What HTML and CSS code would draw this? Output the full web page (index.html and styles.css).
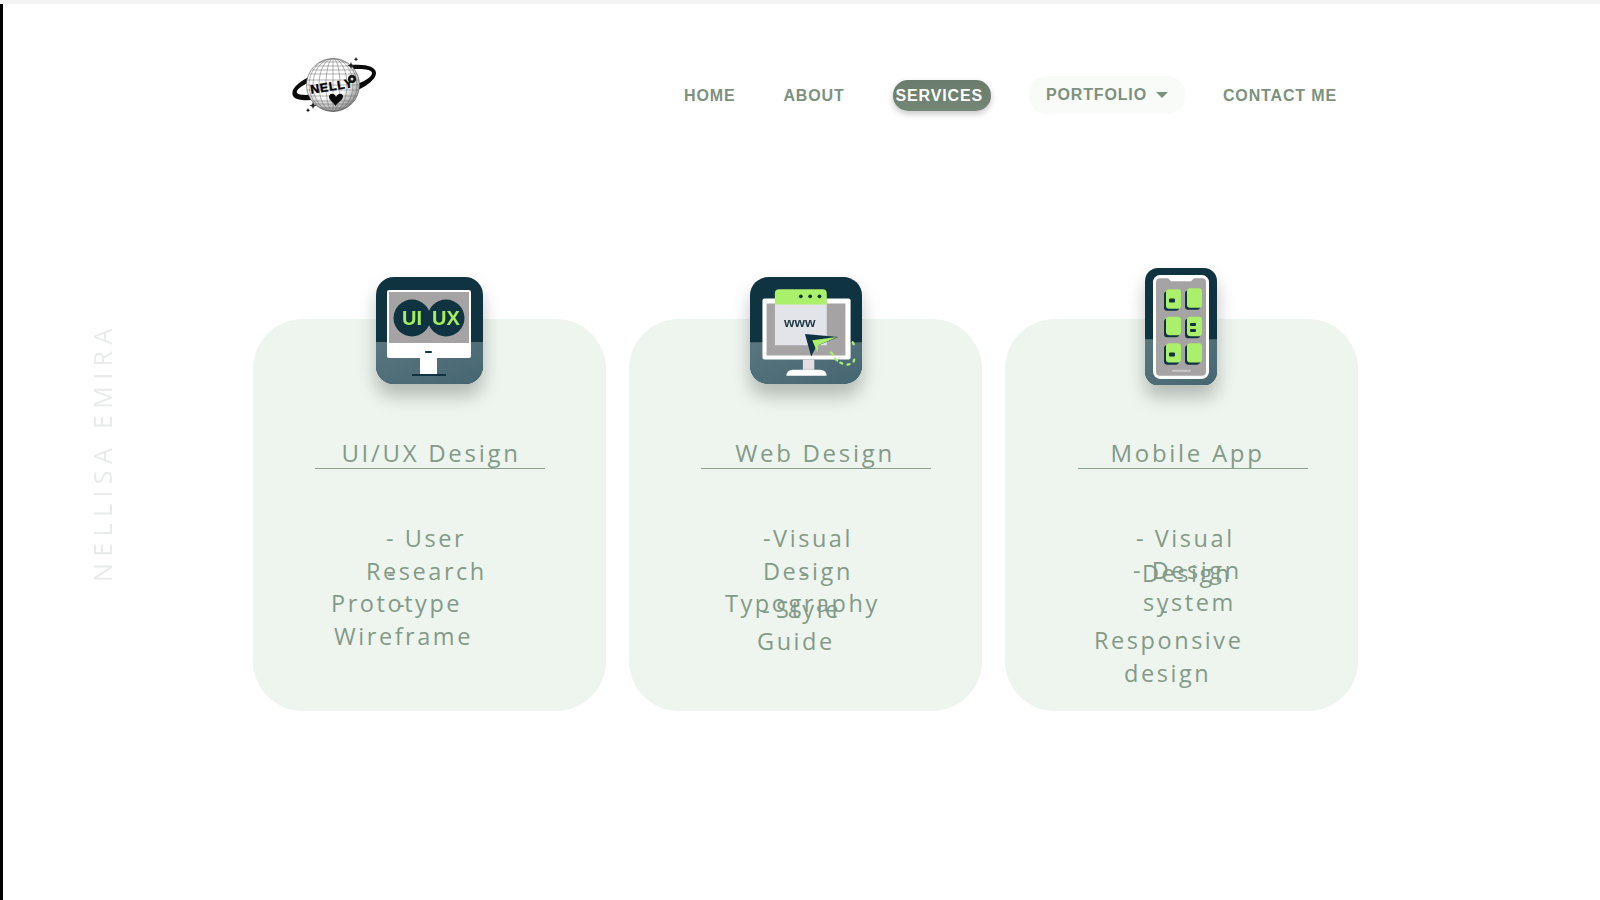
FILE: index.html
```html
<!DOCTYPE html>
<html lang="en">
<head>
<meta charset="utf-8">
<title>Services</title>
<link rel="stylesheet" href="styles.css">
</head>
<body>
<div class="topbar"></div>
<div class="shell">
  <header class="header">
    <a class="logo" href="#" aria-label="Nelly logo">
      <svg width="90" height="62" viewBox="0 0 90 62">
        <defs>
          <radialGradient id="gl" cx="0.38" cy="0.3" r="0.8"><stop offset="0.55" stop-color="#fff"/><stop offset="1" stop-color="#777"/></radialGradient>
          <clipPath id="gc"><circle cx="42" cy="31" r="26.500"/></clipPath>
        </defs>
        <path d="M2 42C-3 31 24 17 52 12C70 9 85 11 85 19C85 27 70 37 48 42C30 46 6 49 2 42ZM6 39C9 43 30 40 46 36.500C64 32 81 25 81 19C81 15 68 14 54 16C34 20 3 33 6 39Z" fill="#0a0a0a" fill-rule="evenodd"/>
        <circle cx="42" cy="31" r="26.500" fill="url(#gl)"/>
        <g clip-path="url(#gc)" fill="none" stroke="#666" stroke-width="0.5">
          <ellipse cx="42" cy="31" rx="7" ry="26.500"/><ellipse cx="42" cy="31" rx="14" ry="26.500"/><ellipse cx="42" cy="31" rx="20" ry="26.500"/><ellipse cx="42" cy="31" rx="24" ry="26.500"/>
          <path d="M42 4V58M15 31H69M18 20H66M18 42H66M24 12H60M24 50H60M16 26H68M16 36H68M20 47H64M21 16H63M28 8H56M28 54H56"/>
        </g>
        <circle cx="42" cy="31" r="26.500" fill="none" stroke="#555" stroke-width="0.6"/>
        <text class="logo-word" x="19" y="37" transform="rotate(-9 38 32)">NELLY</text>
        <circle cx="61" cy="25" r="4" fill="#111"/><circle cx="61" cy="25" r="1.500" fill="#ddd"/>
        <path d="M45 43C43.500 38.500 38 39 38 43C38 46 42 48 44.500 52C47 48 52 46 52 42.500C52 39 47 38.500 45 43Z" fill="#0a0a0a"/>
        <path d="M60 8l1 2.500 2.500 1-2.500 1-1 2.500-1-2.500-2.500-1 2.500-1zM65 3l.7 1.500 1.500.7-1.500.7-.7 1.500-.7-1.500-1.500-.7 1.500-.7zM22 48l1 2.500 2.500 1-2.500 1-1 2.500-1-2.500-2.500-1 2.500-1zM17 54l.7 1.500 1.500.7-1.500.7-.7 1.500-.7-1.500-1.500-.7 1.500-.7z" fill="#222"/>
      </svg>
    </a>
    <nav class="nav">
      <a class="nav-link" href="#">HOME</a>
      <a class="nav-link" href="#">ABOUT</a>
      <a class="nav-link nav-active" href="#">SERVICES</a>
      <a class="nav-link nav-drop" href="#">PORTFOLIO<span class="caret"></span></a>
      <a class="nav-link nav-contact" href="#">CONTACT ME</a>
    </nav>
  </header>

  <main class="content">
    <aside class="side-name">NELLISA EMIRA</aside>
    <section class="cards">
      <article class="card">
        <div class="icon-row">
          <svg class="icon" width="107" height="107" viewBox="0 0 107 107">
            <defs><linearGradient id="lo" x1="0" y1="0" x2="1" y2="1"><stop offset="0" stop-color="#58767f"/><stop offset="1" stop-color="#466672"/></linearGradient></defs>
            <rect width="107" height="107" rx="18" fill="#0f3341"/>
            <path d="M0 65H107V89A18 18 0 0 1 89 107H18A18 18 0 0 1 0 89Z" fill="url(#lo)"/>
            <rect x="11" y="13" width="84" height="68" rx="2" fill="#fff"/>
            <rect x="13" y="15" width="80" height="51" fill="#a5a3a3"/>
            <circle cx="36" cy="41" r="18.500" fill="#0f3341"/><circle cx="70" cy="41" r="18.500" fill="#0f3341"/>
            <text class="ui-word" x="36" y="48">UI</text><text class="ui-word" x="70" y="48">UX</text>
            <rect x="44" y="78" width="17" height="19" fill="#fff"/>
            <rect x="49" y="74" width="7" height="2" rx="1" fill="#0f3341"/>
            <rect x="36" y="97" width="34" height="2" fill="#0f3341"/>
          </svg>
        </div>
        <h2 class="title title-ux">UI/UX Design</h2>
        <div class="rule rule-ux"></div>
        <div class="body">
          <span class="line c1a">- User</span>
          <span class="line c1b">Research</span>
          <span class="line c1c">Prototype</span>
          <span class="line c1d">Wireframe</span>
          <span class="dash d1a">-</span>
          <span class="dash d1b">-</span>
        </div>
      </article>

      <article class="card">
        <div class="icon-row">
          <svg class="icon" width="112" height="107" viewBox="0 0 108 105" preserveAspectRatio="none">
            <defs><linearGradient id="lo2" x1="0" y1="0" x2="1" y2="1"><stop offset="0" stop-color="#58767f"/><stop offset="1" stop-color="#466672"/></linearGradient></defs>
            <rect width="108" height="105" rx="18" fill="#0f3341"/>
            <path d="M0 64H108V87A18 18 0 0 1 90 105H18A18 18 0 0 1 0 87Z" fill="url(#lo2)"/>
            <rect x="12" y="21" width="85" height="60" rx="2" fill="#fff"/>
            <rect x="16" y="26" width="76" height="51" fill="#a5a3a3"/>
            <rect x="24" y="24" width="50" height="43" fill="#e3e4ea"/>
            <path d="M24 16a4 4 0 0 1 4-4H70a4 4 0 0 1 4 4V27H24Z" fill="#aaf06a"/>
            <circle cx="49" cy="19" r="1.800" fill="#0f3341"/><circle cx="58" cy="19" r="1.800" fill="#0f3341"/><circle cx="67" cy="19" r="1.800" fill="#0f3341"/>
            <text class="www" x="48" y="49">www</text>
            <rect x="51" y="81" width="11" height="10" fill="#e3dfe1"/>
            <path d="M35 97a6 6 0 0 1 6-6H68a6 6 0 0 1 6 6Z" fill="#fff"/>
            <path d="M53 56L85 59L64 68L59 78Z" fill="#0f3341"/>
            <path d="M60 62L84 59L66 67L65 74Z" fill="#aaf06a"/>
            <path d="M78 74l2 2M82 80l2 2M87 84l2 1M94 86l2-.500M100 83l.500-2M99 64l1 2" stroke="#aaf06a" stroke-width="2.200" stroke-linecap="round" fill="none"/>
          </svg>
        </div>
        <h2 class="title title-web">Web Design</h2>
        <div class="rule rule-web"></div>
        <div class="body">
          <span class="line c2a">-Visual</span>
          <span class="line c2b">Design</span>
          <span class="line c2c">Typography</span>
          <span class="line over c2d">Style</span>
          <span class="line c2e">Guide</span>
          <span class="dash d2a">-</span>
          <span class="dash d2b">-</span>
        </div>
      </article>

      <article class="card">
        <div class="icon-row icon-row-app">
          <svg class="icon" width="72" height="117" viewBox="0 0 72 115" preserveAspectRatio="none">
            <defs><linearGradient id="lo3" x1="0" y1="0" x2="1" y2="1"><stop offset="0" stop-color="#58767f"/><stop offset="1" stop-color="#466672"/></linearGradient></defs>
            <rect width="72" height="115" rx="13" fill="#0f3341"/>
            <path d="M0 70H72V102A13 13 0 0 1 59 115H13A13 13 0 0 1 0 102Z" fill="url(#lo3)"/>
            <rect x="8" y="7" width="56" height="102" rx="7" fill="#fff"/>
            <path d="M11 14a4 4 0 0 1 4-4H23L26 13H46L49 10H57a4 4 0 0 1 4 4V102a4 4 0 0 1-4 4H15a4 4 0 0 1-4-4Z" fill="#a5a3a3"/>
            <g fill="#0f3341">
              <rect x="19" y="23" width="15" height="19" rx="3"/><rect x="40" y="22" width="15" height="19" rx="3"/>
              <rect x="19" y="50" width="15" height="18" rx="3"/><rect x="40" y="50" width="15" height="19" rx="3"/>
              <rect x="19" y="76" width="15" height="19" rx="3"/><rect x="40" y="76" width="15" height="19" rx="3"/>
            </g>
            <g fill="#aaf06a">
              <rect x="21" y="21" width="15" height="19" rx="3"/><rect x="42" y="20" width="15" height="19" rx="3"/>
              <rect x="21" y="48" width="15" height="18" rx="3"/><rect x="42" y="48" width="15" height="19" rx="3"/>
              <rect x="21" y="74" width="15" height="19" rx="3"/><rect x="42" y="74" width="15" height="19" rx="3"/>
            </g>
            <g fill="#0f3341">
              <rect x="24" y="30" width="6" height="4" rx="1"/><rect x="45" y="54" width="6" height="3" rx="1"/><rect x="45" y="60" width="6" height="3" rx="1"/><rect x="24" y="83" width="6" height="4" rx="1"/>
            </g>
            <rect x="27" y="100" width="19" height="2" rx="1" fill="#c9c9c9"/>
          </svg>
        </div>
        <h2 class="title title-app">Mobile App</h2>
        <div class="rule rule-app"></div>
        <div class="body">
          <span class="line c3a">- Visual</span>
          <span class="line c3b">- Design</span>
          <span class="line over c3c">Design</span>
          <span class="line c3d">system</span>
          <span class="line c3e">Responsive</span>
          <span class="line c3f">design</span>
          <span class="dash d3a">-</span>
        </div>
      </article>
    </section>
  </main>
</div>
</body>
</html>
```

FILE: styles.css
```css
* { box-sizing: border-box; }
html, body { margin: 0; height: 100%; }
body { background: #fff; overflow: hidden; font-family: "Open Sans", "Noto Sans", sans-serif; }
.topbar { height: 4px; background: #f3f3f3; }
.shell { height: 896px; border-left: 3px solid #000; }

.header { display: flex; align-items: flex-start; padding: 50px 0 0 288px; height: 180px; }
.logo { display: block; width: 90px; height: 62px; }
.logo-word { font: 900 12.500px "Liberation Sans", sans-serif; letter-spacing: .7px; fill: #000; stroke: #000; stroke-width: .35px; }

.nav { display: flex; align-items: center; gap: 38px; margin-left: 298px; height: 40px; margin-top: 22px; }
.nav-link { font: 700 16px "Liberation Sans", Arial, sans-serif; letter-spacing: .85px; color: #7d917f; text-decoration: none; padding: 0 5px; white-space: nowrap; }
.nav-active { margin-left: 5px; margin-top: -1px; padding: 0 8px 0 3px; height: 31px; line-height: 31px; border-radius: 15px; color: #fff; background: linear-gradient(#6a7c6b, #748675); box-shadow: 0 3px 6px rgba(0,0,0,.22); }
.nav-drop { height: 38px; padding: 0 17px; margin-top: -3px; border-radius: 18px; background: #f8fbf8; display: flex; align-items: center; }
.nav-contact { margin-left: -5px; }
.caret { margin-left: 9px; width: 0; height: 0; border: 6px solid transparent; border-top-color: #7d917f; border-bottom: 0; }

.content { display: flex; align-items: flex-start; }
.side-name { writing-mode: vertical-rl; transform: rotate(180deg); margin: 136px 0 0 86px; width: 27px; height: 262px; line-height: 27px; font-size: 25px; letter-spacing: 6.400px; color: #e8ebe9; white-space: nowrap; text-align: left; }
.cards { display: flex; gap: 23px; margin: 135px 0 0 137px; }
.card { position: relative; width: 353px; height: 392px; background: #edf5ee; border-radius: 50px; }
.icon-row { display: flex; justify-content: center; height: 0; }
.icon { display: block; margin-top: -42px; flex: none; filter: drop-shadow(0 12px 9px rgba(0,0,0,.24)); }
.icon-row-app { padding-right: 2px; }
.icon-row-app .icon { margin-top: -51px; }
.ui-word { font: 700 20px "Liberation Sans", sans-serif; fill: #a6ee5e; text-anchor: middle; }
.www { font: 700 13px "Liberation Sans", sans-serif; fill: #1f3b45; text-anchor: middle; }

.title { margin: 0; height: 35px; padding-top: 114px; font-weight: 400; font-size: 24px; line-height: 40px; letter-spacing: 2.700px; color: #849a88; white-space: nowrap; box-sizing: content-box; text-align: center; }
.title-ux { padding-left: 3px; }
.title-web { padding-left: 19px; }
.title-app { padding-left: 12px; }
.rule { height: 1px; width: 230px; background: #8ba08f; }
.rule-ux { margin-left: 62px; }
.rule-web { margin-left: 72px; }
.rule-app { margin-left: 73px; }

.body { position: relative; padding-top: 53px; }
.line { display: block; height: 33px; line-height: 33px; font-size: 23.500px; letter-spacing: 2.550px; color: #849a88; white-space: nowrap; }
.over { position: absolute; }
.dash { position: absolute; font-size: 24px; line-height: 33px; color: #849a88; }

.c1a { margin-left: 133px; }
.c1b { margin-left: 113px; }
.c1c { margin-left: 78px; margin-top: -1px; }
.c1d { margin-left: 81px; }
.d1a { left: 134px; top: 87px; }
.d1b { left: 144px; top: 118px; }

.c2a { margin-left: 134px; }
.c2b { margin-left: 134px; }
.c2c { margin-left: 96px; margin-top: -1px; }
.c2d { left: 147px; top: 124px; }
.c2e { margin-left: 128px; margin-top: 5px; }
.d2a { left: 171px; top: 87px; }
.d2b { left: 133px; top: 124px; }

.c3a { margin-left: 131px; }
.c3b { margin-left: 128px; margin-top: -1px; }
.c3c { left: 137px; top: 88px; }
.c3d { margin-left: 138px; margin-top: -1px; }
.c3e { margin-left: 89px; margin-top: 5px; }
.c3f { margin-left: 119px; }
.d3a { left: 155px; top: 124px; }
```
